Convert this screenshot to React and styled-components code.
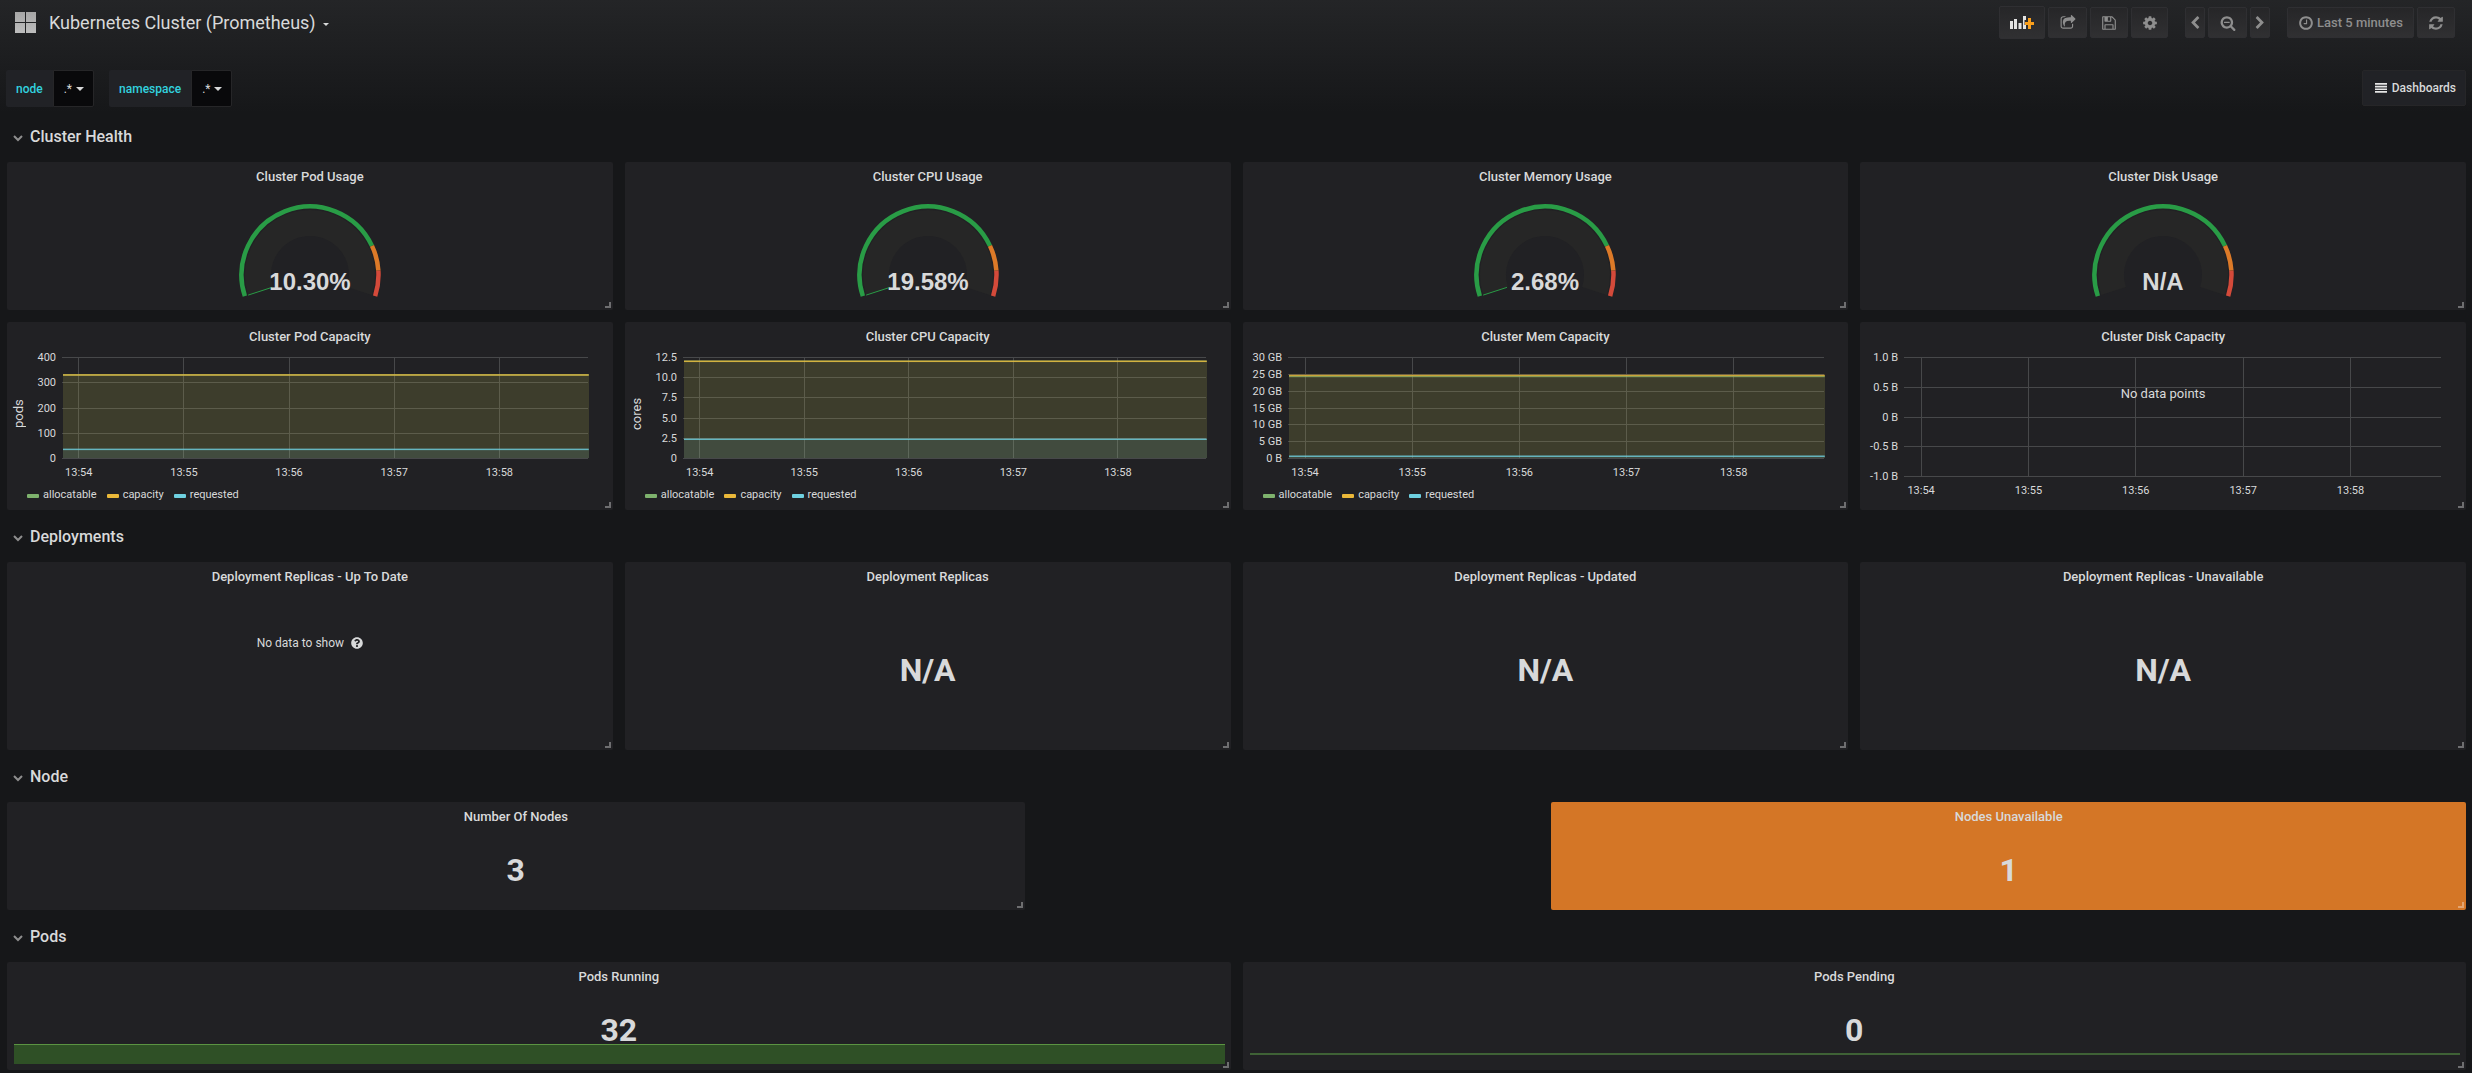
import React from "react";
import styled, { createGlobalStyle } from "styled-components";
import { FaQuestionCircle } from "react-icons/fa";

const GlobalStyle = createGlobalStyle`
  * {
    box-sizing: border-box;
  }

  body {
    margin: 0;
    background: #161719;
    color: #d8d9da;
    font-family: Roboto, "Liberation Sans", sans-serif;
    font-size: 13px;
  }

  button {
    font: inherit;
    color: inherit;
    cursor: pointer;
  }
`;

const icons = {
  share:
    "M1472 989v259q0 119-84.5 203.5t-203.5 84.5h-832q-119 0-203.5-84.5t-84.5-203.5v-832q0-119 84.5-203.5t203.5-84.5h255q13 0 22.5 9.5t9.5 22.5q0 27-26 32-77 26-133 60-10 4-16 4h-112q-66 0-113 47t-47 113v832q0 66 47 113t113 47h832q66 0 113-47t47-113v-214q0-19 18-29 28-13 54-37 16-16 35-8 21 9 21 29zm237-496l-384 384q-18 19-45 19-12 0-25-5-39-17-39-59v-192h-160q-323 0-438 131-119 137-74 473 3 23-20 34-8 2-12 2-16 0-26-13-10-14-21-31t-39.5-68.5-49.5-99.5-38.5-114-17.5-122q0-49 3.5-91t14-90 28-88 47-81.5 68.5-74 94.5-61.5 124.5-48.5 159.5-30.5 196.500-11h160v-192q0-42 39-59 13-5 25-5 26 0 45 19l384 384q19 19 19 45t-19 45z",
  save: "M512 1536h768v-384h-768v384zm896 0h128v-896q0-14-10-38.5t-20-34.5l-281-281q-10-10-34-20t-39-10v416q0 40-28 68t-68 28h-576q-40 0-68-28t-28-68v-416h-128v1280h128v-416q0-40 28-68t68-28h832q40 0 68 28t28 68v416zm-384-928v-320q0-13-9.5-22.5t-22.5-9.5h-192q-13 0-22.5 9.5t-9.5 22.5v320q0 13 9.5 22.5t22.5 9.5h192q13 0 22.5-9.5t9.5-22.5zm640 32v928q0 40-28 68t-68 28h-1344q-40 0-68-28t-28-68v-1344q0-40 28-68t68-28h928q40 0 88 20t76 48l280 280q28 28 48 76t20 88z",
  cog: "M1152 896q0-106-75-181t-181-75-181 75-75 181 75 181 181 75 181-75 75-181zm512-109v222q0 12-8 23t-20 13l-185 28q-19 54-39 91 35 50 107 138 10 12 10 25t-9 23q-27 37-99 108t-94 71q-12 0-26-9l-138-108q-44 23-91 38-16 136-29 186-7 28-36 28h-222q-14 0-24.5-8.5t-11.5-21.5l-28-184q-49-16-90-37l-141 107q-10 9-25 9-14 0-25-11-126-114-165-168-7-10-7-23 0-12 8-23 15-21 51-66.5t54-70.5q-27-50-41-99l-183-27q-13-2-21-12.5t-8-23.5v-222q0-12 8-23t19-13l186-28q14-46 39-92-40-57-107-138-10-12-10-24 0-10 9-23 26-36 98.5-107.5t94.5-71.5q13 0 26 10l138 107q44-23 91-38 16-136 29-186 7-28 36-28h222q14 0 24.5 8.5t11.5 21.5l28 184q49 16 90 37l142-107q9-9 24-9 13 0 25 10 129 119 165 170 7 8 7 22 0 12-8 23-15 21-51 66.5t-54 70.5q26 50 41 98l183 28q13 2 21 12.5t8 23.5z",
  left: "M1427 301l-531 531 531 531q19 19 19 45t-19 45l-166 166q-19 19-45 19t-45-19l-742-742q-19-19-19-45t19-45l742-742q19-19 45-19t45 19l166 166q19 19 19 45t-19 45z",
  right:
    "M1363 877l-742 742q-19 19-45 19t-45-19l-166-166q-19-19-19-45t19-45l531-531-531-531q-19-19-19-45t19-45l166-166q19-19 45-19t45 19l742 742q19 19 19 45t-19 45z",
  zoomOut:
    "M1088 800v64q0 13-9.5 22.5t-22.5 9.5h-576q-13 0-22.5-9.5t-9.5-22.5v-64q0-13 9.5-22.5t22.5-9.5h576q13 0 22.5 9.5t9.5 22.5zm128 32q0-185-131.5-316.5t-316.5-131.5-316.5 131.5-131.5 316.5 131.5 316.5 316.5 131.5 316.5-131.5 131.5-316.5zm512 832q0 53-37.5 90.5t-90.5 37.5q-54 0-90-38l-343-342q-179 124-399 124-143 0-273.5-55.5t-225-150-150-225-55.5-273.5 55.5-273.5 150-225 225-150 273.5-55.5 273.5 55.5 225 150 150 225 55.5 273.5q0 220-124 399l343 343q37 37 37 90z",
  clock:
    "M1024 544v448q0 14-9 23t-23 9h-320q-14 0-23-9t-9-23v-64q0-14 9-23t23-9h224v-352q0-14 9-23t23-9h64q14 0 23 9t9 23zm416 352q0-148-73-273t-198-198-273-73-273 73-198 198-73 273 73 273 198 198 273 73 273-73 198-198 73-273zm224 0q0 209-103 385.5t-279.5 279.5-385.5 103-385.5-103-279.5-279.5-103-385.5 103-385.5 279.5-279.5 385.5-103 385.5 103 279.5 279.5 103 385.5z",
  refresh:
    "M1639 1056q0 5-1 7-64 268-268 434.5t-478 166.5q-146 0-282.5-55t-243.5-157l-129 129q-19 19-45 19t-45-19-19-45v-448q0-26 19-45t45-19h448q26 0 45 19t19 45-19 45l-137 137q71 66 161 102t187 36q134 0 250-65t186-179q11-17 53-117 8-23 30-23h192q13 0 22.5 9.5t9.5 22.5zm25-800v448q0 26-19 45t-45 19h-448q-26 0-45-19t-19-45 19-45l138-138q-148-137-349-137-134 0-250 65t-186 179q-11 17-53 117-8 23-30 23h-199q-13 0-22.5-9.5t-9.5-22.5v-7q65-268 270-434.5t480-166.5q146 0 284 55.5t245 156.5l130-129q19-19 45-19t45 19 19 45z",
};

const Icon = ({ name, size = 16 }) => (
  <svg width={size} height={size} viewBox="0 0 1792 1792" fill="currentColor" aria-hidden="true">
    <path d={icons[name]} />
  </svg>
);

const DashboardIcon = () => (
  <svg width="21" height="21" viewBox="0 0 21 21" aria-hidden="true">
    <defs>
      <linearGradient id="dash" x1="0" y1="0" x2="0" y2="1">
        <stop offset="0" stopColor="#a6a6a6" />
        <stop offset="1" stopColor="#bdbdbd" />
      </linearGradient>
    </defs>
    <path d="M0 0h10v10H0zM11 0h10v10H11zM0 11h10v10H0zM11 11h10v10H11z" fill="url(#dash)" />
  </svg>
);

const AddPanelIcon = () => (
  <svg width="24" height="14" viewBox="0 0 24 14" aria-hidden="true">
    <path
      d="M0 5h3v8H0zM4 3h3v10H4zM8.500 7h3v6h-3zM13 0h3v4h-1.500v5H16v4h-3z"
      fill="#e3e3e3"
    />
    <path d="M18 2h3v4h3v3h-3v4h-3V9h-3V6h3z" fill="#f89e1c" />
  </svg>
);

const App = () => (
  <Page>
    <GlobalStyle />
    <Navbar>
      <TitleButton>
        <DashboardIcon />
        Kubernetes Cluster (Prometheus)
        <Caret $size={3} />
      </TitleButton>
      <Toolbar>
        <ToolGroup>
          <ToolButton $width={46} $tall aria-label="Add panel">
            <AddPanelIcon />
          </ToolButton>
          <ToolButton $width={39} aria-label="Share dashboard">
            <Icon name="share" />
          </ToolButton>
          <ToolButton $width={38} aria-label="Save dashboard">
            <Icon name="save" />
          </ToolButton>
          <ToolButton $width={37} aria-label="Settings">
            <Icon name="cog" />
          </ToolButton>
        </ToolGroup>
        <ToolGroup>
          <ToolButton $width={20} aria-label="Shift time back">
            <Icon name="left" size={14} />
          </ToolButton>
          <ToolButton $width={39} aria-label="Zoom out">
            <Icon name="zoomOut" />
          </ToolButton>
          <ToolButton $width={20} aria-label="Shift time forward">
            <Icon name="right" size={14} />
          </ToolButton>
        </ToolGroup>
        <ToolGroup>
          <ToolButton $width={127}>
            <Icon name="clock" />
            Last 5 minutes
          </ToolButton>
          <ToolButton $width={38} aria-label="Refresh">
            <Icon name="refresh" />
          </ToolButton>
        </ToolGroup>
      </Toolbar>
    </Navbar>

    <Submenu>
      <Variable name="node" />
      <Variable name="namespace" />
      <DashboardsButton>
        <svg width="12" height="10" viewBox="0 0 12 10" fill="#e6e6e6" aria-hidden="true">
          <path d="M0 0h12v1.700H0zM0 2.700h12v1.700H0zM0 5.400h12v1.700H0zM0 8.100h12v1.700H0z" />
        </svg>
        Dashboards
      </DashboardsButton>
    </Submenu>

    <Dashboard>
      <Section title="Cluster Health" />
      <Gauge title="Cluster Pod Usage" value="10.30%" needle />
      <Gauge title="Cluster CPU Usage" value="19.58%" needle />
      <Gauge title="Cluster Memory Usage" value="2.68%" needle />
      <Gauge title="Cluster Disk Usage" value="N/A" />

      <Graph
        title="Cluster Pod Capacity"
        unit="pods"
        left={56}
        ticks={["400", "300", "200", "100", "0"]}
        series={[
          { color: "#7eb26d", y: 0.825 },
          { color: "#eab839", y: 0.825 },
          { color: "#6ed0e0", y: 0.088 },
        ]}
      />
      <Graph
        title="Cluster CPU Capacity"
        unit="cores"
        left={59}
        ticks={["12.5", "10.0", "7.5", "5.0", "2.5", "0"]}
        series={[
          { color: "#7eb26d", y: 0.96 },
          { color: "#eab839", y: 0.96 },
          { color: "#6ed0e0", y: 0.188 },
        ]}
      />
      <Graph
        title="Cluster Mem Capacity"
        left={46}
        ticks={["30 GB", "25 GB", "20 GB", "15 GB", "10 GB", "5 GB", "0 B"]}
        series={[
          { color: "#7eb26d", y: 0.81 },
          { color: "#eab839", y: 0.82 },
          { color: "#6ed0e0", y: 0.02 },
        ]}
      />
      <Graph
        title="Cluster Disk Capacity"
        left={45}
        height={119}
        ticks={["1.0 B", "0.5 B", "0 B", "-0.5 B", "-1.0 B"]}
      />

      <Section title="Deployments" />
      <Panel title="Deployment Replicas - Up To Date" height={188}>
        <NoData>
          No data to show
          <FaQuestionCircle size={12} />
        </NoData>
      </Panel>
      <Panel title="Deployment Replicas" height={188}>
        <Stat>N/A</Stat>
      </Panel>
      <Panel title="Deployment Replicas - Updated" height={188}>
        <Stat>N/A</Stat>
      </Panel>
      <Panel title="Deployment Replicas - Unavailable" height={188}>
        <Stat>N/A</Stat>
      </Panel>

      <Section title="Node" />
      <Panel title="Number Of Nodes" span={10} height={108}>
        <Stat>3</Stat>
      </Panel>
      <Panel title="Nodes Unavailable" start={16} span={9} height={108} color="#d47626">
        <Stat>1</Stat>
      </Panel>

      <Section title="Pods" />
      <Panel title="Pods Running" span={12} height={108}>
        <Stat>32</Stat>
        <Sparkline $height={20} $line="#5b9442" $fill="#2f5026" />
      </Panel>
      <Panel title="Pods Pending" span={12} height={108}>
        <Stat>0</Stat>
        <Sparkline $height={11} $line="#3f6236" $thick />
      </Panel>
    </Dashboard>
  </Page>
);

const Variable = ({ name }) => (
  <VariableGroup>
    <VariableLabel id={`var-${name}`}>{name}</VariableLabel>
    <VariableValue aria-labelledby={`var-${name}`}>
      .*
      <Caret $size={4} />
    </VariableValue>
  </VariableGroup>
);

const Section = ({ title }) => (
  <SectionRow>
    <SectionButton>
      <svg width="10" height="8" viewBox="0 0 10 8" fill="none" aria-hidden="true">
        <path d="M1 2l4 4 4-4" stroke="#8e8e8e" strokeWidth="2" />
      </svg>
      {title}
    </SectionButton>
  </SectionRow>
);

const Panel = ({ title, start, span = 6, height, color, children }) => (
  <PanelBox $start={start} $span={span} $height={height} $color={color}>
    <PanelTitle>{title}</PanelTitle>
    {children}
    <ResizeHandle />
  </PanelBox>
);

// angle 0 points left, the scale runs from -18 to 198 degrees
const point = (radius, percent) => {
  const angle = ((percent * 2.16 - 18) * Math.PI) / 180;
  return `${71 - radius * Math.cos(angle)} ${71 - radius * Math.sin(angle)}`;
};

const arc = (radius, from, to) =>
  `M${point(radius, from)}A${radius} ${radius} 0 ${(to - from) * 2.16 > 180 ? 1 : 0} 1 ${point(radius, to)}`;

const Gauge = ({ title, value, needle }) => (
  <Panel title={title} height={148}>
    <GaugeSvg width="142" height="96" viewBox="0 0 142 96" fill="none">
      <path d={arc(52, 0, 100)} stroke="#262626" strokeWidth="26" />
      <path d={arc(68.5, 0, 80)} stroke="#299c46" strokeWidth="4.500" />
      <path d={arc(68.5, 80, 90)} stroke="#dc7a28" strokeWidth="4.500" />
      <path d={arc(68.5, 90, 100)} stroke="#d44a3a" strokeWidth="4.500" />
      {needle && <path d={`M${point(65, 0)}L${point(40, 0)}`} stroke="#299c46" />}
      <text x="71" y="86" textAnchor="middle">
        {value}
      </text>
    </GaugeSvg>
  </Panel>
);

const times = ["13:54", "13:55", "13:56", "13:57", "13:58"];

const Graph = ({ title, unit, left, height = 101, ticks, series }) => (
  <Panel title={title} height={188}>
    <PlotRow $left={left}>
      {unit && <UnitLabel>{unit}</UnitLabel>}
      <Plot height={height + 24}>
        {ticks.map((tick, i) => {
          const y = Math.round((i * height) / (ticks.length - 1));
          return (
            <React.Fragment key={tick}>
              <rect x="-1" y={y} width="100%" height="1" fill="#47484a" />
              <text x="-7" y={y + 4} textAnchor="end">
                {tick}
              </text>
            </React.Fragment>
          );
        })}
        {times.map((time, i) => (
          <React.Fragment key={time}>
            <rect x={`${2.9 + i * 20}%`} width="1" height={height} fill="#47484a" />
            <text x={`${3 + i * 20}%`} y={height + 18} textAnchor="middle">
              {time}
            </text>
          </React.Fragment>
        ))}
        {series?.map(({ color, y }) => (
          <React.Fragment key={color}>
            <rect y={height * (1 - y)} width="100%" height={height * y} fill={color} opacity="0.1" />
            <rect
              y={height * (1 - y) - 0.5}
              width="100%"
              height="1.5"
              fill={color}
              opacity="0.8"
              shapeRendering="geometricPrecision"
            />
          </React.Fragment>
        ))}
      </Plot>
    </PlotRow>
    {series ? (
      <Legend>
        <LegendItem $color="#7eb26d">allocatable</LegendItem>
        <LegendItem $color="#eab839">capacity</LegendItem>
        <LegendItem $color="#6ed0e0">requested</LegendItem>
      </Legend>
    ) : (
      <NoPoints>No data points</NoPoints>
    )}
  </Panel>
);

const Page = styled.div`
  min-height: 100vh;
  padding-bottom: 3px;
  background: linear-gradient(180deg, #242527 0, #1d1e20 56px, #161719 112px);
`;

const Navbar = styled.header`
  display: flex;
  align-items: center;
  justify-content: space-between;
  height: 45px;
  padding: 0 17px 0 15px;
`;

const TitleButton = styled.button`
  display: flex;
  align-items: center;
  gap: 13px;
  padding: 0;
  border: 0;
  background: none;
  font-size: 18px;

  span {
    margin: 4px 0 0 -6px;
  }
`;

const Caret = styled.span`
  border: ${({ $size }) => $size}px solid transparent;
  border-top-color: currentColor;
  border-bottom: 0;
`;

const Toolbar = styled.div`
  display: flex;
  gap: 17px;
`;

const ToolGroup = styled.div`
  display: flex;
  align-items: center;
  gap: 3px;
`;

const ToolButton = styled.button`
  display: flex;
  align-items: center;
  justify-content: center;
  gap: 3px;
  width: ${({ $width }) => $width}px;
  height: ${({ $tall }) => ($tall ? 33 : 31)}px;
  padding: 0;
  border: 1px solid #2f2f32;
  border-radius: 2px;
  background: linear-gradient(180deg, #262628, #303032);
  color: #8e8e8e;
  font-weight: 500;
  white-space: nowrap;
`;

const Submenu = styled.div`
  display: flex;
  gap: 15px;
  padding: 25px 6px 15px;
`;

const VariableGroup = styled.div`
  display: flex;
  font-size: 12px;
`;

const VariableLabel = styled.span`
  display: flex;
  align-items: center;
  height: 37px;
  padding: 0 10px;
  border-radius: 2px 0 0 2px;
  background: #212226;
  color: #32d1df;
  font-weight: 500;
`;

const VariableValue = styled.button`
  display: flex;
  align-items: center;
  gap: 4px;
  height: 37px;
  padding: 0 9px 0 10px;
  border: 1px solid #262628;
  border-radius: 0 2px 2px 0;
  background: #09090b;
`;

const DashboardsButton = styled.button`
  display: flex;
  align-items: center;
  gap: 5px;
  height: 36px;
  margin-left: auto;
  padding: 0 9px 0 12px;
  border: 1px solid #262628;
  border-radius: 2px;
  background: #212226;
  font-size: 12px;
  font-weight: 500;
`;

const Dashboard = styled.main`
  display: grid;
  grid-template-columns: repeat(24, 1fr);
  gap: 12px;
  padding: 0 6px 0 7px;
`;

const SectionRow = styled.h2`
  grid-column: 1 / -1;
  display: flex;
  height: 28px;
  margin: 0;
  font-size: 16px;
  font-weight: 500;
`;

const SectionButton = styled.button`
  display: flex;
  align-items: center;
  gap: 7px;
  padding: 0 6px;
  border: 0;
  background: none;

  svg {
    margin-top: 4px;
  }
`;

const PanelBox = styled.section`
  position: relative;
  display: flex;
  flex-direction: column;
  grid-column: ${({ $start = "auto", $span }) => `${$start} / span ${$span}`};
  min-width: 0;
  height: ${({ $height }) => $height}px;
  border-radius: 2px;
  background: ${({ $color = "#212124" }) => $color};
`;

const PanelTitle = styled.h3`
  margin: 0;
  font-size: 13px;
  font-weight: 500;
  line-height: 29px;
  text-align: center;
`;

const ResizeHandle = styled.span`
  position: absolute;
  right: 2px;
  bottom: 2px;
  width: 6px;
  height: 6px;
  border: solid rgba(255, 255, 255, 0.35);
  border-width: 0 2px 2px 0;
`;

const GaugeSvg = styled.svg`
  align-self: center;
  margin-top: 13px;

  text {
    fill: #d8d9da;
    font-family: "Liberation Sans", Arial, sans-serif;
    font-size: 24px;
    font-weight: 700;
  }
`;

const PlotRow = styled.div`
  position: relative;
  padding: 6px 24px 0 ${({ $left }) => $left}px;
`;

const UnitLabel = styled.span`
  position: absolute;
  top: 6px;
  left: 4px;
  height: 114px;
  line-height: 16px;
  text-align: center;
  writing-mode: vertical-rl;
  transform: rotate(180deg);
`;

const Plot = styled.svg`
  display: block;
  width: 100%;
  overflow: visible;
  shape-rendering: crispEdges;

  text {
    fill: #d8d9da;
    font-size: 11px;
  }
`;

const Legend = styled.div`
  display: flex;
  gap: 10px;
  margin-top: 5px;
  padding-left: 20px;
  font-size: 11px;
  line-height: 16px;
`;

const LegendItem = styled.span`
  display: flex;
  align-items: center;
  gap: 4px;

  &::before {
    content: "";
    width: 12px;
    height: 4px;
    margin-top: 2px;
    border-radius: 1px;
    background: ${({ $color }) => $color};
  }
`;

const NoPoints = styled.span`
  position: absolute;
  top: 64px;
  left: 0;
  right: 0;
  line-height: 16px;
  text-align: center;
`;

const NoData = styled.div`
  display: flex;
  align-items: center;
  justify-content: center;
  gap: 7px;
  padding-top: 44px;
  font-size: 12px;
  line-height: 16px;
`;

const Stat = styled.div`
  display: flex;
  flex: 1;
  align-items: center;
  justify-content: center;
  padding-bottom: 2px;
  font-size: 32px;
  font-weight: 700;
`;

const Sparkline = styled.div`
  position: absolute;
  left: 7px;
  right: 6px;
  bottom: 6px;
  height: ${({ $height }) => $height}px;
  border-top: ${({ $thick }) => ($thick ? 2 : 1)}px solid ${({ $line }) => $line};
  background: ${({ $fill = "none" }) => $fill};
`;

export default App;
